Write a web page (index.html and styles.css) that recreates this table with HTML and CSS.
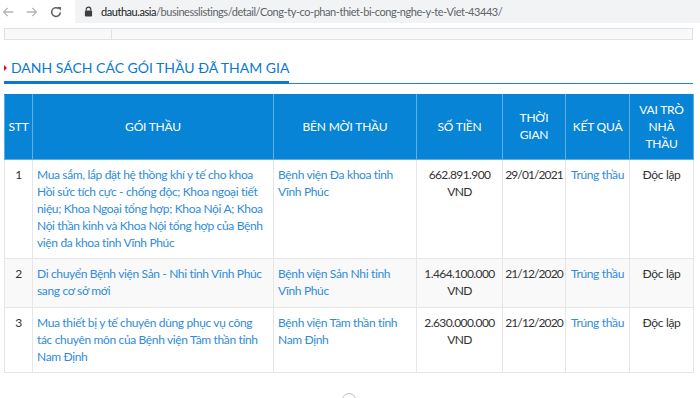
FILE: index.html
```html
<!DOCTYPE html>
<html lang="vi">
<head>
<meta charset="utf-8">
<title>dauthau.asia</title>
<link rel="stylesheet" href="styles.css">
</head>
<body>
<header class="toolbar">
  <div class="nav">
    <svg class="ico ico-off" viewBox="0 0 16 16" width="14" height="14"><path d="M14 8H3M7.5 3.5 3 8l4.5 4.5" fill="none" stroke="currentColor" stroke-width="1.5"/></svg>
    <svg class="ico ico-off" viewBox="0 0 16 16" width="14" height="14"><path d="M2 8h11M8.5 3.5 13 8l-4.5 4.5" fill="none" stroke="currentColor" stroke-width="1.5"/></svg>
    <svg class="ico ico-on" viewBox="0 0 16 16" width="14" height="14"><path d="M13 8.5A5 5 0 1 1 11.2 4.2" fill="none" stroke="currentColor" stroke-width="1.8"/><path d="M9.2 2.2h4.4v4.4z" fill="currentColor"/></svg>
  </div>
  <div class="omnibox">
    <svg class="lock" viewBox="0 0 10 12" width="9" height="11"><path d="M2.5 5V3.6a2.5 2.5 0 0 1 5 0V5" fill="none" stroke="currentColor" stroke-width="1.4"/><rect x="1" y="5" width="8" height="6.5" rx="1" fill="currentColor"/></svg>
    <span class="url"><span class="host">dauthau.asia</span>/businesslistings/detail/Cong-ty-co-phan-thiet-bi-cong-nghe-y-te-Viet-43443/</span>
  </div>
</header>

<main class="page">
  <div class="prev-table">
    <div class="prev-cell prev-first"></div>
    <div class="prev-cell"></div>
  </div>

  <h2 class="section-title"><span class="title-text">DANH SÁCH CÁC GÓI THẦU ĐÃ THAM GIA</span></h2>

  <table class="bids">
    <colgroup>
      <col class="c-stt"><col class="c-goi"><col class="c-ben"><col class="c-tien"><col class="c-time"><col class="c-kq"><col class="c-vt">
    </colgroup>
    <thead>
      <tr>
        <th>STT</th>
        <th>GÓI THẦU</th>
        <th>BÊN MỜI THẦU</th>
        <th>SỐ TIỀN</th>
        <th>THỜI GIAN</th>
        <th>KẾT QUẢ</th>
        <th>VAI TRÒ NHÀ THẦU</th>
      </tr>
    </thead>
    <tbody>
      <tr>
        <td class="center">1</td>
        <td><a href="#">Mua sắm, lắp đặt hệ thồng khí y tế cho khoa Hồi sức tích cực - chống độc; Khoa ngoại tiết niệu; Khoa Ngoại tổng hợp; Khoa Nội A; Khoa Nội thần kinh và Khoa Nội tổng hợp của Bệnh viện đa khoa tỉnh Vĩnh Phúc</a></td>
        <td><a href="#">Bệnh viện Đa khoa tỉnh Vĩnh Phúc</a></td>
        <td class="center num">662.891.900 VND</td>
        <td class="center num date">29/01/2021</td>
        <td class="center nowrap"><a href="#">Trúng thầu</a></td>
        <td class="center">Độc lập</td>
      </tr>
      <tr>
        <td class="center">2</td>
        <td><a href="#">Di chuyển Bệnh viện Sản - Nhi tỉnh Vĩnh Phúc sang cơ sở mới</a></td>
        <td><a href="#">Bệnh viện Sản Nhi tỉnh Vĩnh Phúc</a></td>
        <td class="center num">1.464.100.000 VND</td>
        <td class="center num date">21/12/2020</td>
        <td class="center nowrap"><a href="#">Trúng thầu</a></td>
        <td class="center">Độc lập</td>
      </tr>
      <tr>
        <td class="center">3</td>
        <td><a href="#">Mua thiết bị y tế chuyên dùng phục vụ công tác chuyên môn của Bệnh viện Tâm thần tỉnh Nam Định</a></td>
        <td><a href="#">Bệnh viện Tâm thần tỉnh Nam Định</a></td>
        <td class="center num">2.630.000.000 VND</td>
        <td class="center num date">21/12/2020</td>
        <td class="center nowrap"><a href="#">Trúng thầu</a></td>
        <td class="center">Độc lập</td>
      </tr>
    </tbody>
  </table>
  <div class="more"><span class="more-dot"></span></div>
</main>
</body>
</html>
```

FILE: styles.css
```css
* { box-sizing: border-box; }
html, body { margin: 0; padding: 0; background: #fff; }
body {
  font-family: Lato, "Open Sans", sans-serif;
  font-size: 12px;
  color: #333;
  width: 700px;
  height: 398px;
  overflow: hidden;
}

.toolbar {
  display: flex;
  align-items: center;
  height: 24px;
  background: #fff;
}
.nav {
  display: flex;
  align-items: center;
  gap: 10px;
  width: 75px;
  padding-left: 1px;
}
.ico { display: block; }
.ico-off { color: #b3b6ba; }
.ico-on { color: #5f6368; }
.omnibox {
  flex: 1;
  height: 24px;
  background: #f1f3f4;
  display: flex;
  align-items: center;
  padding-left: 9px;
  gap: 8px;
  margin-top: -2px;
}
.lock { color: #3c4043; display: block; }
.url {
  color: #5f6368;
  font-size: 11px;
  letter-spacing: -0.45px;
  white-space: nowrap;
}
.host { color: #202124; }

.page {
  padding: 4px 7px 0 4px;
}
.prev-table {
  display: flex;
  height: 12px;
  background: #f9f9f9;
  border: 1px solid #e2e2e2;
}
.prev-cell { flex: 1; }
.prev-first { flex: 0 0 107px; border-right: 1px solid #e2e2e2; }

.section-title {
  margin: 20px 0 10px;
  font-size: 14px;
  font-weight: normal;
  line-height: 16px;
  color: #0b79cf;
  border-bottom: 1px solid #1f88d6;
  height: 24px;
}
.title-text {
  display: inline-block;
  position: relative;
  padding-left: 7px;
  height: 24px;
  border-bottom: 3px solid #0b79cf;
  margin-bottom: -1px;
}
.title-text::before {
  content: "";
  position: absolute;
  left: 0;
  top: 5px;
  border-left: 3px solid #d0102a;
  border-top: 3px solid transparent;
  border-bottom: 3px solid transparent;
}

.bids {
  width: 689px;
  border-collapse: collapse;
  table-layout: fixed;
  border: 1px solid #e3e3e3;
  letter-spacing: -0.35px;
}
.c-stt { width: 28px; }
.c-goi { width: 241px; }
.c-ben { width: 143px; }
.c-tien { width: 86px; }
.c-time { width: 63px; }
.c-kq { width: 64px; }
.c-vt { width: 64px; }

.bids th {
  background: #0784d6;
  color: #fff;
  font-weight: normal;
  text-align: center;
  vertical-align: middle;
  line-height: 16.8px;
  padding: 7px 3px;
  border: 1px solid #5cafe8;
  border-top-color: #0784d6;
  letter-spacing: -0.2px;
}
.bids td {
  vertical-align: top;
  line-height: 16.8px;
  padding: 7px 4px;
  border: 1px solid #e6e6e6;
}
.bids td.center { padding-left: 2px; padding-right: 2px; }
.bids tbody tr:nth-child(2) td { background: #f9f9f9; }
.center { text-align: center; }
.num { letter-spacing: -0.6px; }
.date { letter-spacing: -0.9px; }
.nowrap { white-space: nowrap; }
.bids a { color: #2f8bd9; text-decoration: none; }

.more {
  display: flex;
  justify-content: center;
  padding-top: 20px;
}
.more-dot {
  width: 14px;
  height: 14px;
  border: 1px solid #bdbdbd;
  border-radius: 50%;
}
```
